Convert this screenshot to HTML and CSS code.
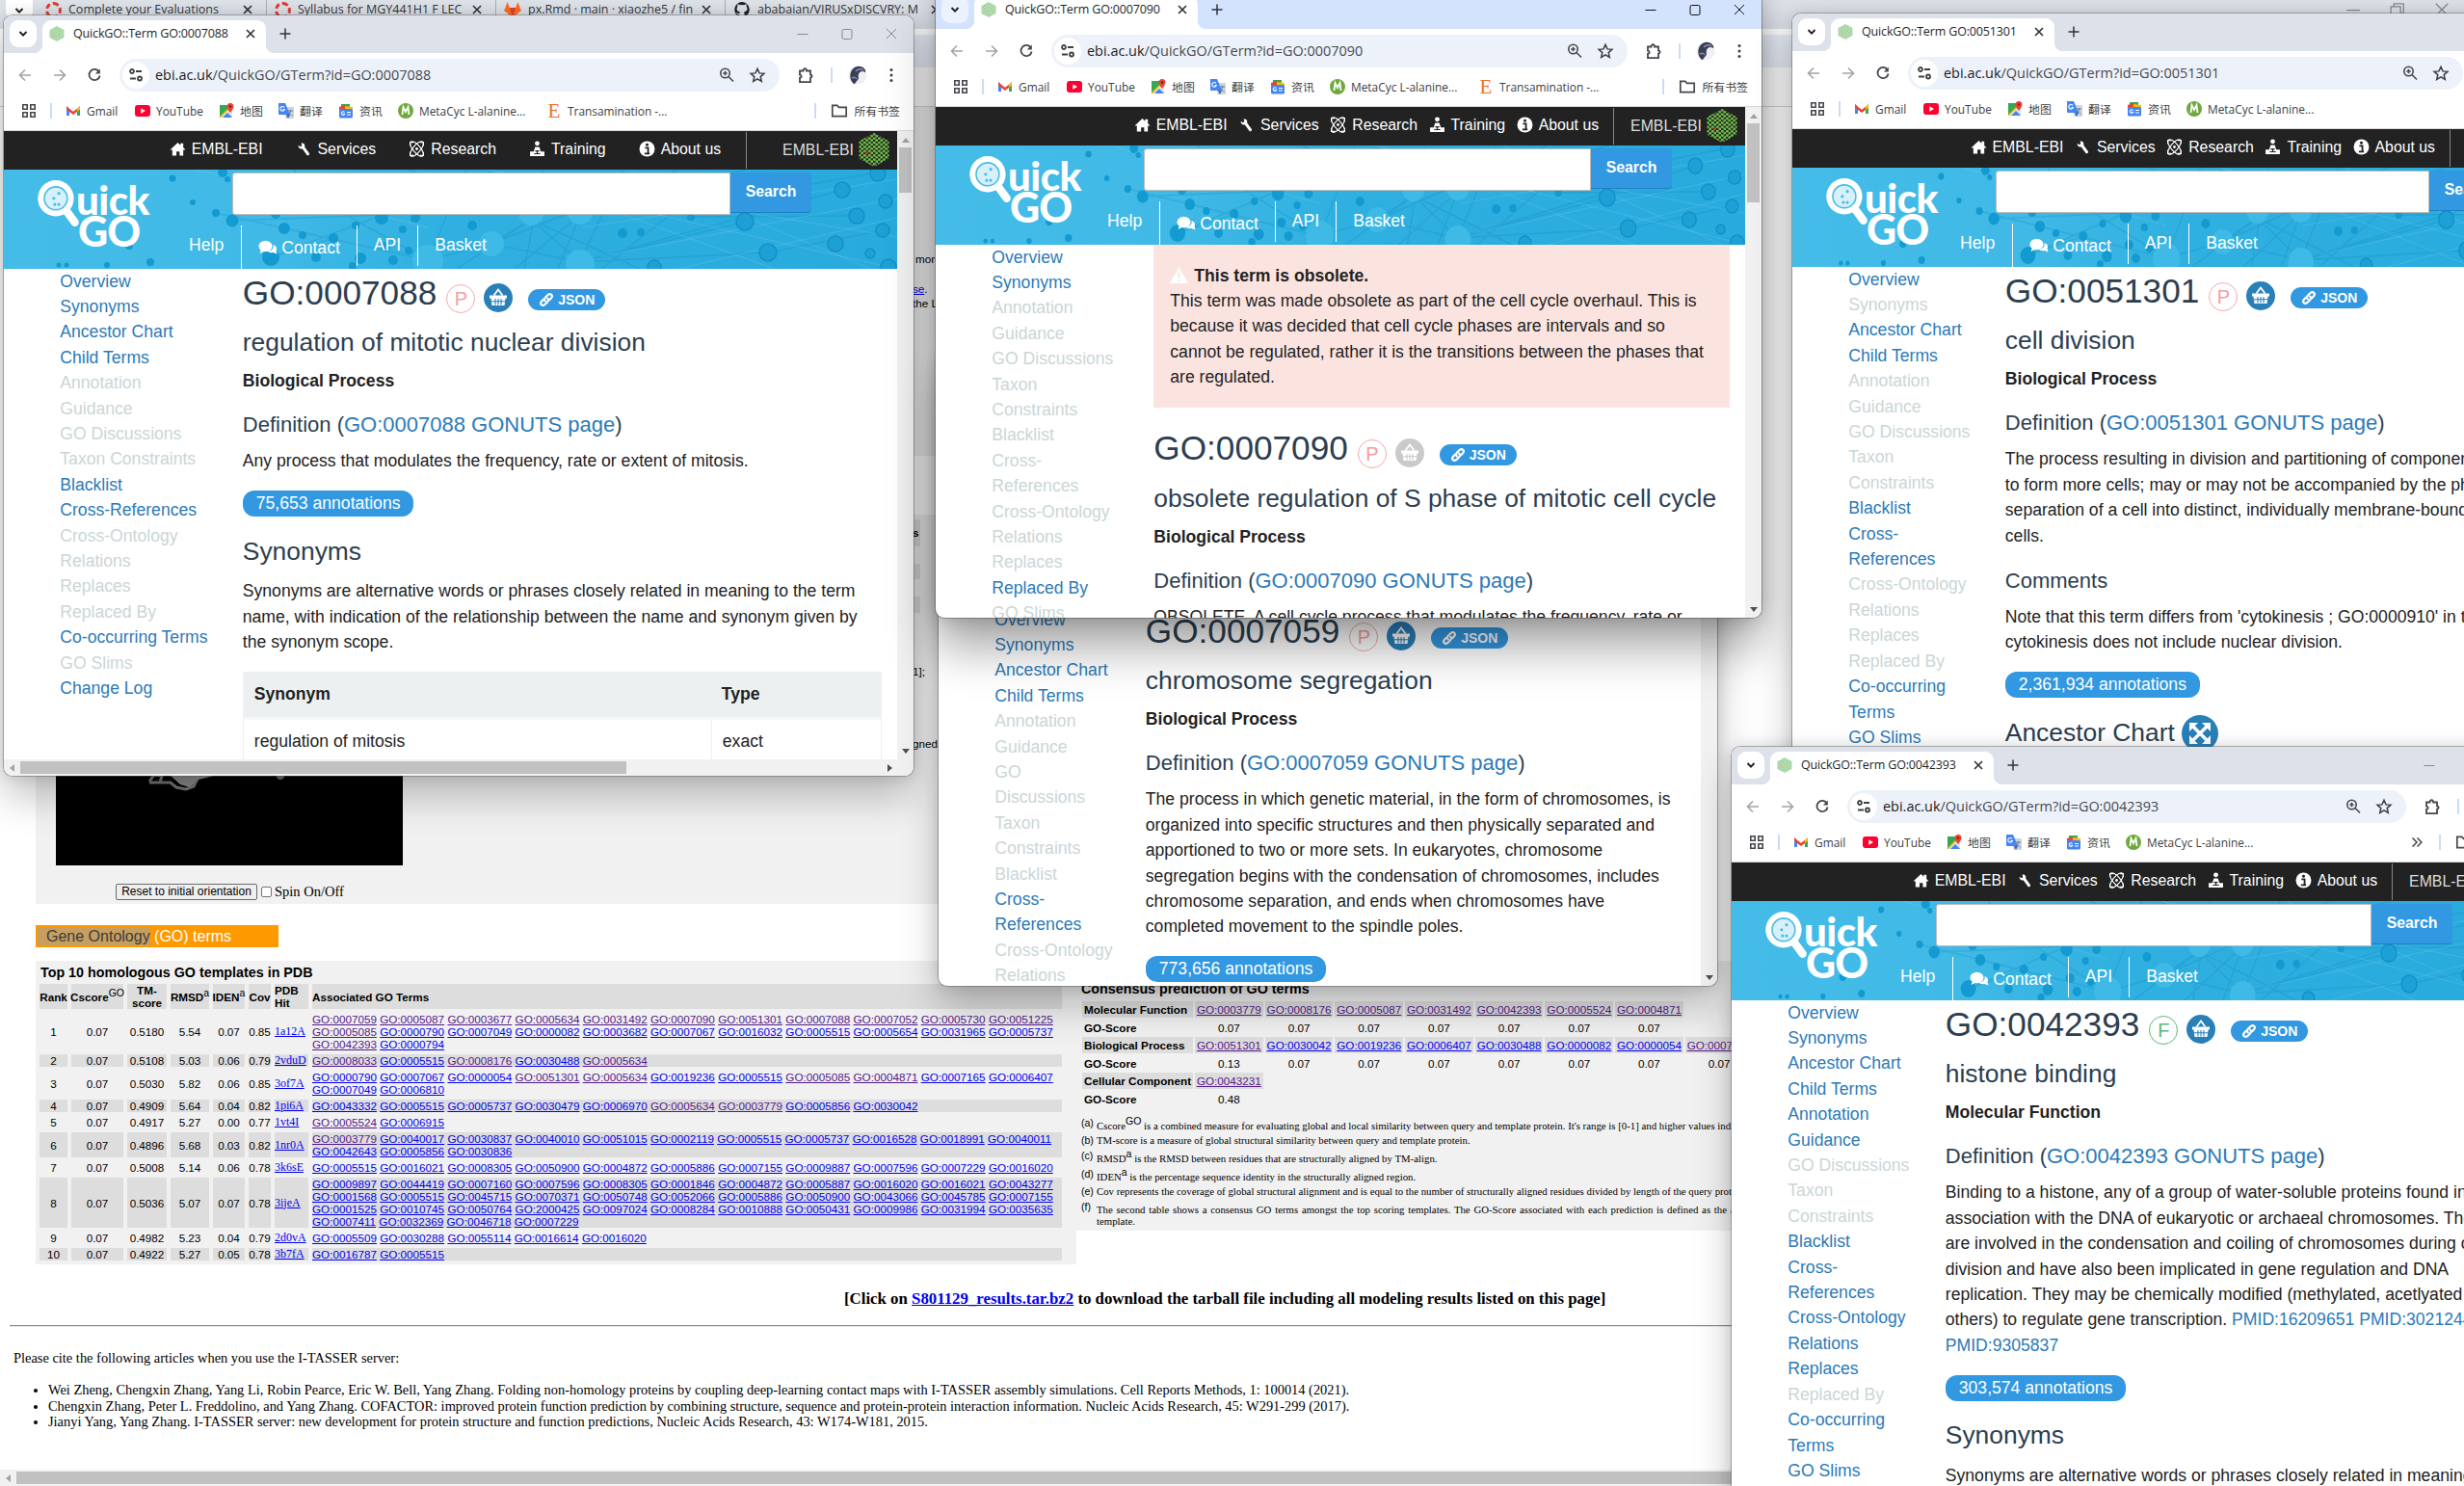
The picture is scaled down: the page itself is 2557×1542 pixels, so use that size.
FILE: index.html
```html
<!DOCTYPE html>
<html lang="en">
<head>
<meta charset="utf-8">
<title>QuickGO terms</title>
<link rel="stylesheet" href="styles.css">
</head>
<body>
<svg class="defs" aria-hidden="true">
  <defs>
    <pattern id="cells" width="5" height="4.4" patternUnits="userSpaceOnUse"><circle cx="1.25" cy="1.1" r="1.45" fill="#72c14a"/><circle cx="3.75" cy="3.3" r="1.45" fill="#72c14a"/></pattern>
    <pattern id="cellsPale" width="3.2" height="3.2" patternUnits="userSpaceOnUse"><rect width="3.2" height="3.2" fill="#cbe8c6"/><circle cx=".8" cy=".8" r=".9" fill="#8cc98a"/><circle cx="2.4" cy="2.4" r=".9" fill="#8cc98a"/></pattern>
    <linearGradient id="sea"><stop offset="0" stop-color="#45bce8"/><stop offset=".3" stop-color="#40b9e6"/><stop offset=".5" stop-color="#2fb0e0"/><stop offset="1" stop-color="#28aadd"/></linearGradient>
  </defs>
  <symbol id="i-chev" viewBox="0 0 16 16"><path d="M4.5 6l3.5 3.6L11.500 6" fill="none" stroke="#1f1f1f" stroke-width="1.9"/></symbol>
  <symbol id="i-fav" viewBox="0 0 16 16"><path d="M8 0l7.500 4v8L8 16 .5 12V4z" fill="url(#cellsPale)"/><circle cx="5" cy="9.500" r="1" fill="#f0a59a"/></symbol>
  <symbol id="i-x" viewBox="0 0 16 16"><path d="M4 4l8 8M12 4l-8 8" stroke="#303338" stroke-width="1.700"/></symbol>
  <symbol id="i-plus" viewBox="0 0 16 16"><path d="M8 2.500v11M2.500 8h11" stroke="#303338" stroke-width="1.500"/></symbol>
  <symbol id="i-min" viewBox="0 0 16 16"><path d="M2.500 8.500h11" stroke="currentColor"/></symbol>
  <symbol id="i-max" viewBox="0 0 16 16"><rect x="3" y="3.500" width="10" height="10" rx="1.500" fill="none" stroke="currentColor"/></symbol>
  <symbol id="i-rest" viewBox="0 0 16 16"><path d="M2.500 5.500h8v8h-8zM5 5V3h8v8h-2" fill="none" stroke="currentColor"/></symbol>
  <symbol id="i-close" viewBox="0 0 16 16"><path d="M3 3l10 10M13 3L3 13" stroke="currentColor"/></symbol>
  <symbol id="i-back" viewBox="0 0 18 18"><path d="M15 9H4M9 3.500L3.500 9 9 14.500" fill="none" stroke="#a0a3a8" stroke-width="1.600"/></symbol>
  <symbol id="i-fwd" viewBox="0 0 18 18"><path d="M3 9h11M9 3.500L14.500 9 9 14.500" fill="none" stroke="#a0a3a8" stroke-width="1.600"/></symbol>
  <symbol id="i-reload" viewBox="0 0 18 18"><path d="M13.800 5.500A5.600 5.600 0 1 0 14.600 9.500" fill="none" stroke="#44474c" stroke-width="1.800"/><path d="M14.800 2.500v5h-5z" fill="#44474c"/></symbol>
  <symbol id="i-tune" viewBox="0 0 18 18"><g fill="none" stroke="#3c4043" stroke-width="1.800"><circle cx="5" cy="5" r="2"/><path d="M9 5h6M3 12.500h6"/><circle cx="13" cy="12.500" r="2"/></g></symbol>
  <symbol id="i-zoom" viewBox="0 0 18 18"><g fill="none" stroke="#44474c" stroke-width="1.600"><circle cx="7.500" cy="7" r="4.700"/><path d="M11 10.500l5 5M7.500 4.800v4.400M5.300 7h4.400"/></g></symbol>
  <symbol id="i-star" viewBox="0 0 18 18"><path d="M9 2.300l2 4.600 4.900.4-3.700 3.300 1.100 4.900L9 12.900l-4.300 2.600 1.100-4.900-3.700-3.300 4.900-.4z" fill="none" stroke="#3c4043" stroke-width="1.500"/></symbol>
  <symbol id="i-ext" viewBox="0 0 18 18"><path d="M3 4.500h3.600c-.3-3 3.800-3 3.500 0H14v4c2.200.2 2.200 3 0 3.200v4.500H3v-4.300c2.300-.2 2.300-3 0-3.200z" fill="none" stroke="#44474c" stroke-width="1.800"/></symbol>
  <symbol id="i-face" viewBox="0 0 20 20"><circle cx="10" cy="10" r="9.500" fill="#eef0f4"/><path d="M3 15C0 6 7-1 13 1c4 1 6 4 5 6-3-2-6-1-7 2s1 4-1 6-3 5-4 4-2-2-3-4z" fill="#3b3f55"/><path d="M8 6c2-2 5-3 8-1M4 13c2-1 4-1 5 1" stroke="#8a90b8" stroke-width="1.500" fill="none"/></symbol>
  <symbol id="i-menu" viewBox="0 0 18 18"><g fill="#3c4043"><circle cx="9" cy="3.500" r="1.500"/><circle cx="9" cy="9" r="1.500"/><circle cx="9" cy="14.500" r="1.500"/></g></symbol>
  <symbol id="i-apps" viewBox="0 0 16 16"><path d="M1.800 1.800h4.400v4.400H1.800zM9.800 1.800h4.400v4.400H9.800zM1.800 9.800h4.400v4.400H1.800zM9.800 9.800h4.400v4.400H9.800z" fill="none" stroke="#44474c" stroke-width="1.600"/></symbol>
  <symbol id="i-gmail" viewBox="0 0 16 16"><path d="M1 3v10h3V6z" fill="#4285f4"/><path d="M15 3v10h-3V6z" fill="#34a853"/><path d="M1 3.200l3 2.500 4 3 4-3V9l-4 3-4-3-3-2.500z" fill="#ea4335"/><path d="M12 5.500l3-2.500v3.500L12 9z" fill="#fbbc04"/></symbol>
  <symbol id="i-yt" viewBox="0 0 16 16"><rect y="2" width="16" height="12" rx="3" fill="#f03"/><path d="M6.300 5.200v5.600L11 8z" fill="#fff"/></symbol>
  <symbol id="i-map" viewBox="0 0 16 16"><path d="M1 2h9v13H1z" fill="#34a853"/><path d="M1 15L12 4l2 4v7z" fill="#dfe3e6"/><path d="M4 15l5-5 5 5z" fill="#4285f4"/><path d="M1 15L11 5" stroke="#fbbc04" stroke-width="1.500"/><path d="M12 0a3.500 3.500 0 0 1 3.500 3.500C15.500 6 12 10 12 10S8.500 6 8.500 3.500A3.500 3.500 0 0 1 12 0z" fill="#ea4335"/><circle cx="12" cy="3.500" r="1.200" fill="#7a1f18"/></symbol>
  <symbol id="i-trans" viewBox="0 0 16 16"><rect x="7" y="4" width="9" height="12" rx="1" fill="#cfd4d9"/><path d="M0 0h7l5 12H1a1 1 0 0 1-1-1z" fill="#4285f4"/><path d="M8 12h4l-2 4z" fill="#2b62c4"/><path d="M6 4.500a2.300 2.300 0 1 0 .3 2H4.500" fill="none" stroke="#fff" stroke-width="1.100"/><path d="M10 8h5M12.500 7v1c0 2-1.500 4-2.500 4.500M11 9.500c.5 1.500 2 3 3.500 3.500" stroke="#5f7d9c" fill="none"/></symbol>
  <symbol id="i-news" viewBox="0 0 16 16"><path d="M3 1h9v6H3z" fill="#34a853"/><path d="M1 4l6-2 1 5H1z" fill="#ea4335"/><path d="M7 3l8 1v4H7z" fill="#fbbc04"/><rect x="1" y="6" width="14" height="9.500" rx="1.500" fill="#4285f4"/><path d="M6.500 9.500a1.800 1.800 0 1 0 .2 1.700H5.200M9 9.500h4M9 12h4" fill="none" stroke="#fff" stroke-width="1.100"/></symbol>
  <symbol id="i-meta" viewBox="0 0 16 16"><circle cx="8" cy="8" r="8" fill="#6fa83c"/><path d="M4.500 12L5.500 4l2.500 5 2.500-5 1 8" fill="none" stroke="#fff" stroke-width="1.800"/></symbol>
  <symbol id="i-folder" viewBox="0 0 18 16"><path d="M1.800 13.700V2.300h5l1.700 2h7.700v9.400z" fill="none" stroke="#44474c" stroke-width="1.700"/></symbol>
  <symbol id="i-home" viewBox="0 0 18 16"><path d="M9 1l3 3V2h3v4.500L17.500 9H15v6.500h-4V11H7.500v4.500H3V9H.5z" fill="#fff"/></symbol>
  <symbol id="i-wrench" viewBox="0 0 16 16"><path d="M2.500 4.500l2 1.300L6 4.800 5.200 2.500C8 2 9.300 4 8.600 6l4.600 6.500c.3 1.500-1.500 2.500-2.500 1.300L6.500 8C4.200 8.500 2.200 7 2.500 4.500z" fill="#fff"/></symbol>
  <symbol id="i-atom" viewBox="0 0 16 16"><g fill="none" stroke="#fff" stroke-width="1.100"><ellipse cx="8" cy="8" rx="9" ry="3.600" transform="rotate(50 8 8)"/><ellipse cx="8" cy="8" rx="9" ry="3.600" transform="rotate(-50 8 8)"/><path d="M1.500 5v-3.500H5M11 1.500h3.500V5M1.500 11v3.500H5M11 14.500h3.500V11"/></g><circle cx="8" cy="8" r="1.300" fill="#fff"/></symbol>
  <symbol id="i-train" viewBox="0 0 16 16"><circle cx="8" cy="2.700" r="2.300" fill="#fff"/><path d="M6 6h4l1.500 4.500H15V15H1v-4.500h3.500z" fill="#fff"/><path d="M6 10h4M5 12.700h6M8 10.500v2" stroke="#222" stroke-width="1.100"/></symbol>
  <symbol id="i-info" viewBox="0 0 16 16"><circle cx="8" cy="8" r="7.500" fill="#fff"/><path d="M6 7h3v5M5.500 12.500h5" stroke="#222" stroke-width="1.700" fill="none"/><circle cx="8" cy="4" r="1.400" fill="#222"/></symbol>
  <symbol id="i-hex" viewBox="0 0 32 35"><path d="M16 0l15.500 8.500v18L16 35 .5 26.500v-18z" fill="url(#cells)"/><circle cx="8.750" cy="21" r="1.500" fill="#e2231a"/></symbol>
  <symbol id="i-talk" viewBox="0 0 20 16"><ellipse cx="7.500" cy="6.500" rx="7" ry="5.700" fill="#fff"/><path d="M3 10l-1.500 4 5-2.500zM15.500 5c3 1 4.500 3.500 3 6l1 3.500-4-1.500c-3 .5-5-.3-6-1.500 4 0 7-2.500 6-6.500z" fill="#fff"/></symbol>
  <symbol id="i-basket" viewBox="0 0 30 30"><path d="M6 12.500h18v3H6zM7.500 15.500h15L21.500 23h-13z" fill="#fff"/><path d="M10.500 12.500L15 6.500l4.500 6" fill="none" stroke="#fff" stroke-width="1.800"/><path d="M8 18.800h14M12 16v6.500M15 16v6.500M18 16v6.500" stroke="var(--disc)" stroke-width="1.100"/></symbol>
  <symbol id="i-link" viewBox="0 0 16 16"><g fill="none" stroke="#fff" stroke-width="2.200" stroke-linecap="round"><path d="M6.800 9.300c-1.200-1-1-2.500 0-3.500l3-3c2.600-2 5.200.8 3.400 3.200l-2 2.200"/><path d="M9.200 6.700c1.200 1 1 2.500 0 3.500l-3 3c-2.600 2-5.200-.8-3.400-3.200l2-2.200"/></g></symbol>
  <symbol id="i-warn" viewBox="0 0 20 18"><path d="M10 0l10 18H0z" fill="#fff"/><path d="M10 6v6M10 14v2" stroke="#fbe4df" stroke-width="2"/></symbol>
  <symbol id="i-expand" viewBox="0 0 38 38"><circle cx="19" cy="19" r="19" fill="#2980b9"/><path d="M11 11l16 16M27 11L11 27" stroke="#fff" stroke-width="3.500"/><path d="M8 8h9l-9 9zM30 8h-9l9 9zM8 30h9l-9-9zM30 30h-9l9-9z" fill="#fff"/></symbol>
  <symbol id="net" viewBox="0 0 927 103" preserveAspectRatio="none">
    <rect width="927" height="103" fill="url(#sea)"/>
    <g stroke="#1186b8" stroke-opacity=".26" stroke-width="1.500" fill="none">
      <path d="M440 94L220 45M440 94L291 61M440 94L342 40 300 0M440 94L506 77 598 96M506 77L547 52 420 0M598 47L500 0M598 96L547 52M598 96L642 0M598 96L769 54M598 96L870 21M598 47L770 0M547 52L660 103M506 77L700 0M440 94L480 0M540 103L560 0M575 103L598 47L530 103M598 96L793 86M793 86L913 63M713 49L885 48M620 103L700 40 900 4M470 103L547 52M237 53L392 47M277 91L392 47M277 91L342 71"/>
    </g>
    <g stroke="#9fdcf5" stroke-opacity=".22" fill="none"><path d="M500 0L927 70M560 20L927 103M600 60L927 10M620 90L927 30M650 0L900 103M200 0L440 60M540 10L800 103M700 103L927 50"/></g>
    <g fill="#139ad0">
      <circle cx="175" cy="9" r="3.500"/><circle cx="196" cy="34" r="3"/><circle cx="220" cy="45" r="4"/><circle cx="237" cy="53" r="6.500"/><circle cx="227" cy="3" r="5"/><circle cx="232" cy="10" r="3"/><circle cx="291" cy="61" r="6"/><circle cx="282" cy="46" r="5"/><circle cx="152" cy="96" r="4"/><circle cx="107" cy="99" r="3"/><circle cx="57" cy="99" r="2.500"/><circle cx="65" cy="99" r="2.500"/><circle cx="130" cy="79" r="4"/><circle cx="277" cy="91" r="9"/><circle cx="324" cy="91" r="5"/><circle cx="342" cy="71" r="5"/><circle cx="310" cy="68" r="4"/><circle cx="365" cy="58" r="4"/><circle cx="370" cy="92" r="6"/><circle cx="362" cy="100" r="4"/><circle cx="392" cy="50" r="7"/><circle cx="396" cy="80" r="5"/><circle cx="404" cy="94" r="5"/><circle cx="414" cy="62" r="4"/><circle cx="420" cy="84" r="4"/><circle cx="427" cy="50" r="5"/><circle cx="486" cy="58" r="5"/><circle cx="642" cy="66" r="5"/><circle cx="661" cy="65" r="4"/><circle cx="713" cy="49" r="4"/>
    </g>
    <g fill="#1ca0d5" stroke="#1490c4" stroke-width="1.500"><circle cx="769" cy="54" r="9"/><circle cx="793" cy="86" r="9"/><circle cx="870" cy="21" r="8"/><circle cx="885" cy="48" r="8"/><circle cx="915" cy="33" r="7"/><circle cx="912" cy="63" r="7"/><circle cx="863" cy="77" r="8"/><circle cx="899" cy="87" r="5"/><circle cx="907" cy="4" r="8"/><circle cx="918" cy="101" r="8"/><circle cx="675" cy="101" r="7"/></g>
    <g fill="#3fbae7"><circle cx="440" cy="94" r="16"/><circle cx="506" cy="77" r="13"/><circle cx="547" cy="45" r="13"/><circle cx="598" cy="44" r="13"/><circle cx="598" cy="98" r="15"/></g>
  </symbol>
  <symbol id="q" viewBox="0 0 50 76"><circle cx="23" cy="21" r="18" fill="#fff"/><circle cx="23" cy="21" r="11.500" fill="#d7f0fb" stroke="#45bce8" stroke-width="1.500"/><path d="M34 34l8 11" stroke="#fff" stroke-width="8" stroke-linecap="round"/><g fill="#45bce8"><circle cx="26" cy="16" r="1.500"/><circle cx="21" cy="21" r="1.500"/><circle cx="22" cy="27" r="1.500"/><circle cx="26" cy="27" r="1.500"/></g></symbol>
</svg>

<div class="desk">

<!-- Maximised browser window: I-TASSER results -->
<div class="back">
  <div class="back-tabs">
    <span class="back-chev"><svg class="s16"><use href="#i-chev"/></svg></span>
    <span class="btab"><i class="canvas-ico"></i><b>Complete your Evaluations</b><svg class="s16"><use href="#i-x"/></svg></span>
    <span class="btab"><i class="canvas-ico"></i><b>Syllabus for MGY441H1 F LEC</b><svg class="s16"><use href="#i-x"/></svg></span>
    <span class="btab"><svg class="s18" viewBox="0 0 18 18"><path d="M1 8L3.500 1l2.500 6h6L14.500 1 17 8l1 2-9 7L0 10z" fill="#fc6d26"/><path d="M6 7h6l-3 10z" fill="#e24329"/></svg><b>px.Rmd · main · xiaozhe5 / fin</b><svg class="s16"><use href="#i-x"/></svg></span>
    <span class="btab"><svg class="s18" viewBox="0 0 18 18"><path d="M9 1a8 8 0 0 0-2.500 15.500V14c-2 .5-2.700-1-3.500-2 1.500 0 1.800 1.500 3.500 1 0-.7.300-1.200.6-1.500C3 11 3 7 4.500 5.800 4 4.500 4.600 3.300 4.600 3.300c1 0 2 .8 2.300 1a8 8 0 0 1 4.200 0c.3-.2 1.300-1 2.300-1 0 0 .6 1.200.1 2.500C15 7 15 11 10.900 11.500c.4.400.6 1 .6 2v3A8 8 0 0 0 9 1z" fill="#1f2328"/></svg><b>ababaian/VIRUSxDISCVRY: M</b><svg class="s16"><use href="#i-x"/></svg></span>
    <span class="ctl back-ctl"><svg class="s20"><use href="#i-min"/></svg><svg class="s20"><use href="#i-rest"/></svg><svg class="s20"><use href="#i-close"/></svg></span>
  </div>
  <div class="back-bar"><div class="back-omni"></div></div>
  <div class="res">
    <div class="box box-a"><div class="frag"><p class="f1">more</p><p class="f2"><a>se</a>.</p><p>the L</p></div></div>
    <div class="box box-b">
      <div class="viewer">
        <div class="jmol"><svg viewBox="0 0 360 60" width="360" height="60"><path d="M97 9l5-7 8 1-2 7M97 10h22l6 5 10 2 8-3 4-8" fill="none" stroke="#777" stroke-width="3"/><path d="M118 2h50l-20 5-9 8-10-3z" fill="#8d8d8d"/><circle cx="233" cy="3" r="4" fill="#6d6d6d"/></svg></div>
        <div class="spin"><span class="btn">Reset to initial orientation</span><span class="chk"></span><span>Spin On/Off</span></div>
      </div>
      <div class="frag frag-b"><p class="cell">s</p><p class="cell c2"></p><p class="cell c3"></p><p class="f3">1];</p><p class="f4">gned</p></div>
    </div>
    <div class="banner"><mark>Gene Ontology</mark> (GO) terms</div>
    <div class="go">
      <div class="go-l">
        <h2>Top 10 homologous GO templates in PDB</h2>
        <div class="t hd"><b>Rank</b><b>Cscore<sup>GO</sup></b><b>TM-<br>score</b><b>RMSD<sup>a</sup></b><b>IDEN<sup>a</sup></b><b>Cov</b><b class="l">PDB<br>Hit</b><b class="l">Associated GO Terms</b></div>
        <div class="t"><i>1</i><i>0.07</i><i>0.5180</i><i>5.54</i><i>0.07</i><i>0.85</i><i class="p"><a>1a12A</a></i><i class="g"><a class="v">GO:0007059</a> <a class="v">GO:0005087</a> <a class="v">GO:0003677</a> <a class="v">GO:0005634</a> <a class="v">GO:0031492</a> <a class="v">GO:0007090</a> <a class="v">GO:0051301</a> <a class="v">GO:0007088</a> <a class="v">GO:0007052</a> <a class="v">GO:0005730</a> <a class="v">GO:0051225</a> <a class="v">GO:0005085</a> <a>GO:0000790</a> <a>GO:0007049</a> <a>GO:0000082</a> <a>GO:0003682</a> <a>GO:0007067</a> <a>GO:0016032</a> <a>GO:0005515</a> <a>GO:0005654</a> <a>GO:0031965</a> <a>GO:0005737</a> <a class="v">GO:0042393</a> <a>GO:0000794</a></i></div>
        <div class="t dk"><i>2</i><i>0.07</i><i>0.5108</i><i>5.03</i><i>0.06</i><i>0.79</i><i class="p"><a>2vduD</a></i><i class="g"><a class="v">GO:0008033</a> <a>GO:0005515</a> <a class="v">GO:0008176</a> <a>GO:0030488</a> <a class="v">GO:0005634</a></i></div>
        <div class="t"><i>3</i><i>0.07</i><i>0.5030</i><i>5.82</i><i>0.06</i><i>0.85</i><i class="p"><a>3of7A</a></i><i class="g"><a>GO:0000790</a> <a>GO:0007067</a> <a>GO:0000054</a> <a class="v">GO:0051301</a> <a class="v">GO:0005634</a> <a>GO:0019236</a> <a>GO:0005515</a> <a class="v">GO:0005085</a> <a class="v">GO:0004871</a> <a>GO:0007165</a> <a>GO:0006407</a> <a>GO:0007049</a> <a>GO:0006810</a></i></div>
        <div class="t dk"><i>4</i><i>0.07</i><i>0.4909</i><i>5.64</i><i>0.04</i><i>0.82</i><i class="p"><a>1pi6A</a></i><i class="g"><a>GO:0043332</a> <a>GO:0005515</a> <a>GO:0005737</a> <a>GO:0030479</a> <a>GO:0006970</a> <a class="v">GO:0005634</a> <a class="v">GO:0003779</a> <a>GO:0005856</a> <a>GO:0030042</a></i></div>
        <div class="t"><i>5</i><i>0.07</i><i>0.4917</i><i>5.27</i><i>0.00</i><i>0.77</i><i class="p"><a>1vt4I</a></i><i class="g"><a class="v">GO:0005524</a> <a>GO:0006915</a></i></div>
        <div class="t dk"><i>6</i><i>0.07</i><i>0.4896</i><i>5.68</i><i>0.03</i><i>0.82</i><i class="p"><a>1nr0A</a></i><i class="g"><a class="v">GO:0003779</a> <a>GO:0040017</a> <a>GO:0030837</a> <a>GO:0040010</a> <a>GO:0051015</a> <a>GO:0002119</a> <a>GO:0005515</a> <a>GO:0005737</a> <a>GO:0016528</a> <a>GO:0018991</a> <a>GO:0040011</a> <a>GO:0042643</a> <a>GO:0005856</a> <a>GO:0030836</a></i></div>
        <div class="t"><i>7</i><i>0.07</i><i>0.5008</i><i>5.14</i><i>0.06</i><i>0.78</i><i class="p"><a>3k6sE</a></i><i class="g"><a>GO:0005515</a> <a>GO:0016021</a> <a>GO:0008305</a> <a>GO:0050900</a> <a>GO:0004872</a> <a>GO:0005886</a> <a>GO:0007155</a> <a>GO:0009887</a> <a>GO:0007596</a> <a>GO:0007229</a> <a>GO:0016020</a></i></div>
        <div class="t dk"><i>8</i><i>0.07</i><i>0.5036</i><i>5.07</i><i>0.07</i><i>0.78</i><i class="p"><a>3ijeA</a></i><i class="g"><a>GO:0009897</a> <a>GO:0044419</a> <a>GO:0007160</a> <a>GO:0007596</a> <a>GO:0008305</a> <a>GO:0001846</a> <a>GO:0004872</a> <a>GO:0005887</a> <a>GO:0016020</a> <a>GO:0016021</a> <a>GO:0043277</a> <a>GO:0001568</a> <a>GO:0005515</a> <a>GO:0045715</a> <a>GO:0070371</a> <a>GO:0050748</a> <a>GO:0052066</a> <a>GO:0005886</a> <a>GO:0050900</a> <a>GO:0043066</a> <a>GO:0045785</a> <a>GO:0007155</a> <a>GO:0001525</a> <a>GO:0010745</a> <a>GO:0050764</a> <a>GO:2000425</a> <a>GO:0097024</a> <a>GO:0008284</a> <a>GO:0010888</a> <a>GO:0050431</a> <a>GO:0009986</a> <a>GO:0031994</a> <a>GO:0035635</a> <a>GO:0007411</a> <a>GO:0032369</a> <a>GO:0046718</a> <a>GO:0007229</a></i></div>
        <div class="t"><i>9</i><i>0.07</i><i>0.4982</i><i>5.23</i><i>0.04</i><i>0.79</i><i class="p"><a>2d0vA</a></i><i class="g"><a>GO:0005509</a> <a>GO:0030288</a> <a>GO:0055114</a> <a>GO:0016614</a> <a>GO:0016020</a></i></div>
        <div class="t dk"><i>10</i><i>0.07</i><i>0.4922</i><i>5.27</i><i>0.05</i><i>0.78</i><i class="p"><a>3b7fA</a></i><i class="g"><a>GO:0016787</a> <a>GO:0005515</a></i></div>
      </div>
      <div class="go-r">
        <h2>Consensus prediction of GO terms</h2>
        <div class="c dk"><b>Molecular Function</b><a class="v">GO:0003779</a><a class="v">GO:0008176</a><a class="v">GO:0005087</a><a class="v">GO:0031492</a><a class="v">GO:0042393</a><a class="v">GO:0005524</a><a class="v">GO:0004871</a></div>
        <div class="c"><b>GO-Score</b><i>0.07</i><i>0.07</i><i>0.07</i><i>0.07</i><i>0.07</i><i>0.07</i><i>0.07</i></div>
        <div class="c dk"><b>Biological Process</b><a class="v">GO:0051301</a><a>GO:0030042</a><a>GO:0019236</a><a>GO:0006407</a><a>GO:0030488</a><a>GO:0000082</a><a>GO:0000054</a><a class="v">GO:0007059</a></div>
        <div class="c"><b>GO-Score</b><i>0.13</i><i>0.07</i><i>0.07</i><i>0.07</i><i>0.07</i><i>0.07</i><i>0.07</i><i>0.07</i></div>
        <div class="c dk"><b>Cellular Component</b><a class="v">GO:0043231</a></div>
        <div class="c"><b>GO-Score</b><i>0.48</i></div>
        <div class="notes">
          <p class="n1"><span>(a)</span>Cscore<sup>GO</sup> is a combined measure for evaluating global and local similarity between query and template protein. It's range is [0-1] and higher values indicate</p>
          <p class="n2"><span>(b)</span>TM-score is a measure of global structural similarity between query and template protein.</p>
          <p class="n1"><span>(c)</span>RMSD<sup>a</sup> is the RMSD between residues that are structurally aligned by TM-align.</p>
          <p class="n1"><span>(d)</span>IDEN<sup>a</sup> is the percentage sequence identity in the structurally aligned region.</p>
          <p class="n2"><span>(e)</span>Cov represents the coverage of global structural alignment and is equal to the number of structurally aligned residues divided by length of the query protein.</p>
          <p class="n1 wide"><span>(f)</span>The second table shows a consensus GO terms amongst the top scoring templates. The GO-Score associated with each prediction is defined as the average</p>
          <p class="n3"><span></span>template.</p>
        </div>
      </div>
    </div>
    <p class="dl">[Click on <a>S801129_results.tar.bz2</a> to download the tarball file including all modeling results listed on this page]</p>
    <div class="hr"></div>
    <p class="cite">Please cite the following articles when you use the I-TASSER server:</p>
    <ul class="refs">
      <li>Wei Zheng, Chengxin Zhang, Yang Li, Robin Pearce, Eric W. Bell, Yang Zhang. Folding non-homology proteins by coupling deep-learning contact maps with I-TASSER assembly simulations. Cell Reports Methods, 1: 100014 (2021).</li>
      <li>Chengxin Zhang, Peter L. Freddolino, and Yang Zhang. COFACTOR: improved protein function prediction by combining structure, sequence and protein-protein interaction information. Nucleic Acids Research, 45: W291-299 (2017).</li>
      <li>Jianyi Yang, Yang Zhang. I-TASSER server: new development for protein structure and function predictions, Nucleic Acids Research, 43: W174-W181, 2015.</li>
    </ul>
    <div class="hscroll back-scroll"><i class="al"></i><span class="hthumb"></span></div>
  </div>
</div>

<!-- GO:0007088 -->
<div class="win w1">
  <div class="tabs"><span class="chev"><svg class="s16"><use href="#i-chev"/></svg></span><span class="tab"><svg class="s16"><use href="#i-fav"/></svg><span class="ttl">QuickGO::Term GO:0007088</span><svg class="s16"><use href="#i-x"/></svg></span><svg class="s16 plus"><use href="#i-plus"/></svg><span class="ctl"><svg class="s16"><use href="#i-min"/></svg><svg class="s16"><use href="#i-max"/></svg><svg class="s16"><use href="#i-close"/></svg></span></div>
  <div class="bar"><svg class="s18"><use href="#i-back"/></svg><svg class="s18"><use href="#i-fwd"/></svg><svg class="s18"><use href="#i-reload"/></svg><div class="omni"><span class="tune"><svg class="s18"><use href="#i-tune"/></svg></span><span class="url"><b>ebi.ac.uk</b>/QuickGO/GTerm?id=GO:0007088</span><svg class="s18"><use href="#i-zoom"/></svg><svg class="s18"><use href="#i-star"/></svg></div><svg class="s18"><use href="#i-ext"/></svg><i class="sep"></i><svg class="s20"><use href="#i-face"/></svg><svg class="s18"><use href="#i-menu"/></svg></div>
  <div class="marks"><svg class="s16"><use href="#i-apps"/></svg><i class="sep"></i><span class="m m1"><svg class="s16"><use href="#i-gmail"/></svg>Gmail</span><span class="m m2"><svg class="s16"><use href="#i-yt"/></svg>YouTube</span><span class="m m3"><svg class="s16"><use href="#i-map"/></svg>地图</span><span class="m m3"><svg class="s16"><use href="#i-trans"/></svg>翻译</span><span class="m m3"><svg class="s16"><use href="#i-news"/></svg>资讯</span><span class="m m4"><svg class="s16"><use href="#i-meta"/></svg>MetaCyc L-alanine...</span><span class="m m5"><i class="els">E</i>Transamination -...</span><span class="allm"><i class="sep"></i><svg class="s18"><use href="#i-folder"/></svg>所有书签</span></div>
  <div class="view"><div class="page">
    <div class="ebi"><span><svg class="s18"><use href="#i-home"/></svg>EMBL-EBI</span><span><svg class="s18"><use href="#i-wrench"/></svg>Services</span><span><svg class="s18"><use href="#i-atom"/></svg>Research</span><span><svg class="s18"><use href="#i-train"/></svg>Training</span><span><svg class="s18"><use href="#i-info"/></svg>About us</span><span class="brand">EMBL-EBI<svg class="hex"><use href="#i-hex"/></svg></span></div>
    <div class="hero"><svg class="net"><use href="#net"/></svg><div class="logo"><svg class="q"><use href="#q"/></svg><span class="l1">uick</span><span class="l2">GO</span></div><div class="hmain"><div class="srch"><span class="inp"></span><span class="go-btn">Search</span></div><div class="nav"><span>Help</span><span class="tall"><svg class="talk"><use href="#i-talk"/></svg>Contact</span><span>API</span><span>Basket</span></div></div></div>
    <div class="cols">
      <div class="side"><a>Overview</a><a>Synonyms</a><a>Ancestor Chart</a><a>Child Terms</a><i>Annotation</i><i>Guidance</i><i>GO Discussions</i><i>Taxon Constraints</i><a>Blacklist</a><a>Cross-References</a><i>Cross-Ontology</i><i>Relations</i><i>Replaces</i><i>Replaced By</i><a>Co-occurring Terms</a><i>GO Slims</i><a>Change Log</a></div>
      <div class="main">
        <div class="h1"><h1>GO:0007088</h1><span class="asp">P</span><span class="bsk"><svg><use href="#i-basket"/></svg></span><span class="json"><svg class="s16"><use href="#i-link"/></svg>JSON</span></div>
        <h3>regulation of mitotic nuclear division</h3>
        <p class="aspect">Biological Process</p>
        <h4>Definition (<a>GO:0007088 GONUTS page</a>)</h4>
        <p>Any process that modulates the frequency, rate or extent of mitosis.</p>
        <span class="pill">75,653 annotations</span>
        <h3 class="sec">Synonyms</h3>
        <p>Synonyms are alternative words or phrases closely related in meaning to the term<br>name, with indication of the relationship between the name and synonym given by<br>the synonym scope.</p>
        <div class="tbl"><div class="tr th"><b>Synonym</b><b>Type</b></div><div class="tr"><span>regulation of mitosis</span><span>exact</span></div></div>
      </div>
    </div>
  </div><div class="vscroll"><i class="au"></i><span class="vthumb"></span><i class="ad"></i></div></div>
  <div class="hscroll"><i class="al"></i><span class="hthumb"></span><i class="ar"></i></div>
</div>

<!-- GO:0007059, its own title bar lies behind the next window -->
<div class="win w3">
  <div class="view"><div class="page">
    <div class="cols">
      <div class="side"><a>Overview</a><a>Synonyms</a><a>Ancestor Chart</a><a>Child Terms</a><i>Annotation</i><i>Guidance</i><i>GO<br>Discussions</i><i>Taxon<br>Constraints</i><i>Blacklist</i><a>Cross-<br>References</a><i>Cross-Ontology</i><i>Relations</i></div>
      <div class="main">
        <div class="h1"><h1>GO:0007059</h1><span class="asp">P</span><span class="bsk"><svg><use href="#i-basket"/></svg></span><span class="json"><svg class="s16"><use href="#i-link"/></svg>JSON</span></div>
        <h3>chromosome segregation</h3>
        <p class="aspect">Biological Process</p>
        <h4>Definition (<a>GO:0007059 GONUTS page</a>)</h4>
        <p>The process in which genetic material, in the form of chromosomes, is<br>organized into specific structures and then physically separated and<br>apportioned to two or more sets. In eukaryotes, chromosome<br>segregation begins with the condensation of chromosomes, includes<br>chromosome separation, and ends when chromosomes have<br>completed movement to the spindle poles.</p>
        <span class="pill">773,656 annotations</span>
      </div>
    </div>
  </div><div class="vscroll"><i class="ad"></i></div></div>
</div>

<!-- GO:0007090 -->
<div class="win w2 active">
  <div class="tabs"><span class="chev"><svg class="s16"><use href="#i-chev"/></svg></span><span class="tab"><svg class="s16"><use href="#i-fav"/></svg><span class="ttl">QuickGO::Term GO:0007090</span><svg class="s16"><use href="#i-x"/></svg></span><svg class="s16 plus"><use href="#i-plus"/></svg><span class="ctl"><svg class="s16"><use href="#i-min"/></svg><svg class="s16"><use href="#i-max"/></svg><svg class="s16"><use href="#i-close"/></svg></span></div>
  <div class="bar"><svg class="s18"><use href="#i-back"/></svg><svg class="s18"><use href="#i-fwd"/></svg><svg class="s18"><use href="#i-reload"/></svg><div class="omni"><span class="tune"><svg class="s18"><use href="#i-tune"/></svg></span><span class="url"><b>ebi.ac.uk</b>/QuickGO/GTerm?id=GO:0007090</span><svg class="s18"><use href="#i-zoom"/></svg><svg class="s18"><use href="#i-star"/></svg></div><svg class="s18"><use href="#i-ext"/></svg><i class="sep"></i><svg class="s20"><use href="#i-face"/></svg><svg class="s18"><use href="#i-menu"/></svg></div>
  <div class="marks"><svg class="s16"><use href="#i-apps"/></svg><i class="sep"></i><span class="m m1"><svg class="s16"><use href="#i-gmail"/></svg>Gmail</span><span class="m m2"><svg class="s16"><use href="#i-yt"/></svg>YouTube</span><span class="m m3"><svg class="s16"><use href="#i-map"/></svg>地图</span><span class="m m3"><svg class="s16"><use href="#i-trans"/></svg>翻译</span><span class="m m3"><svg class="s16"><use href="#i-news"/></svg>资讯</span><span class="m m4"><svg class="s16"><use href="#i-meta"/></svg>MetaCyc L-alanine...</span><span class="m m5"><i class="els">E</i>Transamination -...</span><span class="allm"><i class="sep"></i><svg class="s18"><use href="#i-folder"/></svg>所有书签</span></div>
  <div class="view"><div class="page">
    <div class="ebi"><span><svg class="s18"><use href="#i-home"/></svg>EMBL-EBI</span><span><svg class="s18"><use href="#i-wrench"/></svg>Services</span><span><svg class="s18"><use href="#i-atom"/></svg>Research</span><span><svg class="s18"><use href="#i-train"/></svg>Training</span><span><svg class="s18"><use href="#i-info"/></svg>About us</span><span class="brand">EMBL-EBI<svg class="hex"><use href="#i-hex"/></svg></span></div>
    <div class="hero"><svg class="net"><use href="#net"/></svg><div class="logo"><svg class="q"><use href="#q"/></svg><span class="l1">uick</span><span class="l2">GO</span></div><div class="hmain"><div class="srch"><span class="inp"></span><span class="go-btn">Search</span></div><div class="nav"><span>Help</span><span class="tall"><svg class="talk"><use href="#i-talk"/></svg>Contact</span><span>API</span><span>Basket</span></div></div></div>
    <div class="cols">
      <div class="side"><a>Overview</a><a>Synonyms</a><i>Annotation</i><i>Guidance</i><i>GO Discussions</i><i>Taxon<br>Constraints</i><i>Blacklist</i><i>Cross-<br>References</i><i>Cross-Ontology</i><i>Relations</i><i>Replaces</i><a>Replaced By</a><i>GO Slims</i></div>
      <div class="main">
        <div class="alert"><b><svg class="warn"><use href="#i-warn"/></svg>This term is obsolete.</b><br>This term was made obsolete as part of the cell cycle overhaul. This is<br>because it was decided that cell cycle phases are intervals and so<br>cannot be regulated, rather it is the transitions between the phases that<br>are regulated.</div>
        <div class="h1"><h1>GO:0007090</h1><span class="asp">P</span><span class="bsk off"><svg><use href="#i-basket"/></svg></span><span class="json"><svg class="s16"><use href="#i-link"/></svg>JSON</span></div>
        <h3>obsolete regulation of S phase of mitotic cell cycle</h3>
        <p class="aspect">Biological Process</p>
        <h4>Definition (<a>GO:0007090 GONUTS page</a>)</h4>
        <p>OBSOLETE. A cell cycle process that modulates the frequency, rate or</p>
      </div>
    </div>
  </div><div class="vscroll"><i class="au"></i><span class="vthumb"></span><i class="ad"></i></div></div>
</div>

<!-- GO:0051301 -->
<div class="win w4">
  <div class="tabs"><span class="chev"><svg class="s16"><use href="#i-chev"/></svg></span><span class="tab"><svg class="s16"><use href="#i-fav"/></svg><span class="ttl">QuickGO::Term GO:0051301</span><svg class="s16"><use href="#i-x"/></svg></span><svg class="s16 plus"><use href="#i-plus"/></svg></div>
  <div class="bar"><svg class="s18"><use href="#i-back"/></svg><svg class="s18"><use href="#i-fwd"/></svg><svg class="s18"><use href="#i-reload"/></svg><div class="omni"><span class="tune"><svg class="s18"><use href="#i-tune"/></svg></span><span class="url"><b>ebi.ac.uk</b>/QuickGO/GTerm?id=GO:0051301</span><svg class="s18"><use href="#i-zoom"/></svg><svg class="s18"><use href="#i-star"/></svg></div></div>
  <div class="marks"><svg class="s16"><use href="#i-apps"/></svg><i class="sep"></i><span class="m m1"><svg class="s16"><use href="#i-gmail"/></svg>Gmail</span><span class="m m2"><svg class="s16"><use href="#i-yt"/></svg>YouTube</span><span class="m m3"><svg class="s16"><use href="#i-map"/></svg>地图</span><span class="m m3"><svg class="s16"><use href="#i-trans"/></svg>翻译</span><span class="m m3"><svg class="s16"><use href="#i-news"/></svg>资讯</span><span class="m m4"><svg class="s16"><use href="#i-meta"/></svg>MetaCyc L-alanine...</span></div>
  <div class="view"><div class="page">
    <div class="ebi"><span><svg class="s18"><use href="#i-home"/></svg>EMBL-EBI</span><span><svg class="s18"><use href="#i-wrench"/></svg>Services</span><span><svg class="s18"><use href="#i-atom"/></svg>Research</span><span><svg class="s18"><use href="#i-train"/></svg>Training</span><span><svg class="s18"><use href="#i-info"/></svg>About us</span><span class="brand"></span></div>
    <div class="hero"><svg class="net"><use href="#net"/></svg><div class="logo"><svg class="q"><use href="#q"/></svg><span class="l1">uick</span><span class="l2">GO</span></div><div class="hmain"><div class="srch"><span class="inp"></span><span class="go-btn">Search</span></div><div class="nav"><span>Help</span><span class="tall"><svg class="talk"><use href="#i-talk"/></svg>Contact</span><span>API</span><span>Basket</span></div></div></div>
    <div class="cols">
      <div class="side"><a>Overview</a><i>Synonyms</i><a>Ancestor Chart</a><a>Child Terms</a><i>Annotation</i><i>Guidance</i><i>GO Discussions</i><i>Taxon<br>Constraints</i><a>Blacklist</a><a>Cross-<br>References</a><i>Cross-Ontology</i><i>Relations</i><i>Replaces</i><i>Replaced By</i><a>Co-occurring<br>Terms</a><a>GO Slims</a></div>
      <div class="main">
        <div class="h1"><h1>GO:0051301</h1><span class="asp">P</span><span class="bsk"><svg><use href="#i-basket"/></svg></span><span class="json"><svg class="s16"><use href="#i-link"/></svg>JSON</span></div>
        <h3>cell division</h3>
        <p class="aspect">Biological Process</p>
        <h4>Definition (<a>GO:0051301 GONUTS page</a>)</h4>
        <p>The process resulting in division and partitioning of components of a cell<br>to form more cells; may or may not be accompanied by the physical<br>separation of a cell into distinct, individually membrane-bounded daughter<br>cells.</p>
        <h4>Comments</h4>
        <p>Note that this term differs from 'cytokinesis ; GO:0000910' in that<br>cytokinesis does not include nuclear division.</p>
        <span class="pill">2,361,934 annotations</span>
        <h3 class="sec chart">Ancestor Chart <svg class="exp"><use href="#i-expand"/></svg></h3>
      </div>
    </div>
  </div></div>
</div>

<!-- GO:0042393 -->
<div class="win w5">
  <div class="tabs"><span class="chev"><svg class="s16"><use href="#i-chev"/></svg></span><span class="tab"><svg class="s16"><use href="#i-fav"/></svg><span class="ttl">QuickGO::Term GO:0042393</span><svg class="s16"><use href="#i-x"/></svg></span><svg class="s16 plus"><use href="#i-plus"/></svg><span class="ctl"><svg class="s16"><use href="#i-min"/></svg><svg class="s16"><use href="#i-max"/></svg><svg class="s16"><use href="#i-close"/></svg></span></div>
  <div class="bar"><svg class="s18"><use href="#i-back"/></svg><svg class="s18"><use href="#i-fwd"/></svg><svg class="s18"><use href="#i-reload"/></svg><div class="omni"><span class="tune"><svg class="s18"><use href="#i-tune"/></svg></span><span class="url"><b>ebi.ac.uk</b>/QuickGO/GTerm?id=GO:0042393</span><svg class="s18"><use href="#i-zoom"/></svg><svg class="s18"><use href="#i-star"/></svg></div><svg class="s18"><use href="#i-ext"/></svg><i class="sep"></i><svg class="s20"><use href="#i-face"/></svg><svg class="s18"><use href="#i-menu"/></svg></div>
  <div class="marks"><svg class="s16"><use href="#i-apps"/></svg><i class="sep"></i><span class="m m1"><svg class="s16"><use href="#i-gmail"/></svg>Gmail</span><span class="m m2"><svg class="s16"><use href="#i-yt"/></svg>YouTube</span><span class="m m3"><svg class="s16"><use href="#i-map"/></svg>地图</span><span class="m m3"><svg class="s16"><use href="#i-trans"/></svg>翻译</span><span class="m m3"><svg class="s16"><use href="#i-news"/></svg>资讯</span><span class="m m4"><svg class="s16"><use href="#i-meta"/></svg>MetaCyc L-alanine...</span><span class="allm"><svg class="more" viewBox="0 0 12 12"><path d="M1.500 1.500L6 6l-4.500 4.500M6.500 1.500L11 6l-4.500 4.500" fill="none" stroke="#44474c" stroke-width="1.500"/></svg><i class="sep"></i><svg class="s18"><use href="#i-folder"/></svg><span class="allt"></span></span></div>
  <div class="view"><div class="page">
    <div class="ebi"><span><svg class="s18"><use href="#i-home"/></svg>EMBL-EBI</span><span><svg class="s18"><use href="#i-wrench"/></svg>Services</span><span><svg class="s18"><use href="#i-atom"/></svg>Research</span><span><svg class="s18"><use href="#i-train"/></svg>Training</span><span><svg class="s18"><use href="#i-info"/></svg>About us</span><span class="brand">EMBL-EBI<svg class="hex"><use href="#i-hex"/></svg></span></div>
    <div class="hero"><svg class="net"><use href="#net"/></svg><div class="logo"><svg class="q"><use href="#q"/></svg><span class="l1">uick</span><span class="l2">GO</span></div><div class="hmain"><div class="srch"><span class="inp"></span><span class="go-btn">Search</span></div><div class="nav"><span>Help</span><span class="tall"><svg class="talk"><use href="#i-talk"/></svg>Contact</span><span>API</span><span>Basket</span></div></div></div>
    <div class="cols">
      <div class="side"><a>Overview</a><a>Synonyms</a><a>Ancestor Chart</a><a>Child Terms</a><a>Annotation</a><a>Guidance</a><i>GO Discussions</i><i>Taxon<br>Constraints</i><a>Blacklist</a><a>Cross-<br>References</a><a>Cross-Ontology</a><a>Relations</a><a>Replaces</a><i>Replaced By</i><a>Co-occurring<br>Terms</a><a>GO Slims</a></div>
      <div class="main">
        <div class="h1"><h1>GO:0042393</h1><span class="asp fn">F</span><span class="bsk"><svg><use href="#i-basket"/></svg></span><span class="json"><svg class="s16"><use href="#i-link"/></svg>JSON</span></div>
        <h3>histone binding</h3>
        <p class="aspect">Molecular Function</p>
        <h4>Definition (<a>GO:0042393 GONUTS page</a>)</h4>
        <p>Binding to a histone, any of a group of water-soluble proteins found in<br>association with the DNA of eukaryotic or archaeal chromosomes. They<br>are involved in the condensation and coiling of chromosomes during cell<br>division and have also been implicated in gene regulation and DNA<br>replication. They may be chemically modified (methylated, acetlyated and<br>others) to regulate gene transcription. <a>PMID:16209651 PMID:30212449</a><br><a>PMID:9305837</a></p>
        <span class="pill">303,574 annotations</span>
        <h3 class="sec">Synonyms</h3>
        <p>Synonyms are alternative words or phrases closely related in meaning to the</p>
      </div>
    </div>
  </div></div>
</div>

</div>
</body>
</html>
```
FILE: styles.css
```css
* { box-sizing: border-box; }
html, body { margin: 0; padding: 0; }
body { width: 2557px; height: 1542px; overflow: hidden; background: #fff; color: #000; font-family: "Liberation Sans", "Noto Sans CJK SC", sans-serif; }
h1, h2, h3, h4, p, ul { margin: 0; padding: 0; font-weight: normal; }
i { font-style: normal; }
svg { display: block; flex: none; }
.defs { position: absolute; width: 0; height: 0; }
.s16 { width: 16px; height: 16px; }
.s18 { width: 18px; height: 18px; }
.s20 { width: 20px; height: 20px; }
.desk { position: relative; width: 2557px; height: 1542px; overflow: hidden; }

/* results page behind everything */
.back { height: 1542px; display: flex; flex-direction: column; }
.back-tabs { height: 30px; background: #dde1e8; display: flex; align-items: flex-start; padding: 0 0 0 6px; font: 12.5px/22px "Open Sans", sans-serif; color: #33363b; flex: none; }
.back-chev { width: 28px; height: 20px; background: #fff; border-radius: 0 0 8px 8px; display: flex; align-items: center; justify-content: center; margin-right: 5px; padding-top: 2px; }
.btab { width: 238px; height: 20px; display: flex; align-items: center; padding: 0 11px 0 8px; border-right: 1px solid #a9b0ba; }
.btab .s18, .canvas-ico { margin-right: 7px; }
.btab b { flex: 1; font-weight: normal; white-space: nowrap; overflow: hidden; }
.canvas-ico { width: 17px; height: 17px; border-radius: 50%; border: 3px dashed #e23b2e; }
.ctl { margin-left: auto; display: flex; color: #85888d; }
.ctl svg { margin: 0 15px; }
.back-ctl svg { margin: 0 13px; }
.back-bar { height: 81px; background: #fff; border-bottom: 1px solid #d5d5d5; padding-top: 6px; flex: none; }
.back-omni { height: 34px; background: #e9eef8; margin-left: 120px; }
.res { flex: 1; display: flex; flex-direction: column; align-items: flex-start; }
.box { background: #f1f1f1; margin-left: 37px; width: 1463px; flex: none; }
.box-a { height: 362px; padding: 150px 0 0 910px; }
.frag p { font-size: 11.7px; line-height: 15px; white-space: nowrap; }
.frag .f1 { padding-left: 3px; margin-bottom: 16px; }
.res a { color: #00e; text-decoration: underline; }
.res a.v { color: #551a8b; }
.box-b { margin-top: 61px; height: 404px; display: flex; }
.viewer { width: 910px; padding-left: 21px; }
.jmol { width: 360px; height: 364px; background: #000; padding-top: 268px; }
.spin { display: flex; align-items: center; padding: 18px 0 0 62px; font: 14.5px/18px "Liberation Serif", serif; }
.btn { width: 147px; height: 17px; border: 1px solid #6b6b6b; border-radius: 2px; background: #efefef; font: 12px/15px "Liberation Sans", sans-serif; text-align: center; white-space: nowrap; }
.chk { width: 11px; height: 11px; border: 1px solid #767676; border-radius: 2px; background: #fff; margin: 0 3px 0 4px; }
.frag-b { padding-top: 5px; }
.frag .cell { width: 8px; height: 28px; line-height: 28px; font-weight: bold; background: #ddd; }
.frag .c2 { height: 16px; margin-top: 18px; }
.frag .c3 { height: 17px; margin-top: 18px; }
.frag .f3 { margin-top: 53px; }
.frag .f4 { margin-top: 60px; }
.banner { margin: 22px 0 0 37px; width: 252px; height: 23px; background: #f90; color: #fff; font-size: 16px; line-height: 19px; padding: 2px 0 0 2px; white-space: nowrap; }
.banner mark { display: inline-block; background: #c59e60; color: #3c3c3c; padding-left: 9px; height: 19px; }
.go { display: flex; align-items: flex-start; margin: 14px 0 0 37px; }
.go h2 { font-size: 14.3px; font-weight: bold; line-height: 16px; }
.go-l { width: 1080px; height: 315px; background: #f1f1f1; padding: 4px 15px 0 4px; font-size: 11.7px; line-height: 13px; }
.go-l h2 { padding-left: 1px; }
.t { display: grid; grid-template-columns: 29px 54px 41px 40px 33px 23px 35px 778px; column-gap: 4px; margin-top: 4px; }
.t > * { display: flex; align-items: center; justify-content: center; white-space: nowrap; }
.t > .l { justify-content: flex-start; }
.t .p { justify-content: flex-start; font-family: "Liberation Serif", serif; font-size: 12px; }
.t .g { display: block; white-space: normal; }
.t sup { font-size: 10.500px; font-weight: normal; line-height: 0; position: relative; top: -4px; vertical-align: baseline; }
.hd { height: 26px; text-align: center; }
.hd .l { text-align: left; }
.hd > *, .t.dk > * { background: #ddd; }
.go-r { width: 1440px; height: 280px; background: #f1f1f1; padding: 21px 0 0 5px; font-size: 11.7px; line-height: 17px; white-space: nowrap; }
.go-r h2 { margin-bottom: 5px; }
.c { display: flex; gap: 2px; margin: 0 0 1.500px 1px; height: 17px; }
.c b { width: 115px; padding-left: 2px; }
.c a, .c i { width: 70.700px; text-align: center; }
.c.dk > * { background: #ddd; }
.notes { font: 10.800px/14px "Liberation Serif", serif; padding-top: 7px; }
.notes p { display: flex; height: 15px; white-space: pre; }
.notes span { width: 16px; font-family: "Liberation Sans", sans-serif; font-size: 10.500px; }
.notes sup { font: 10.500px/1 "Liberation Sans", sans-serif; margin-top: -3px; }
.notes .n1 { height: 19px; padding-top: 4px; }
.notes .n1 span { margin-top: -3px; }
.notes .wide { word-spacing: 1.050px; height: 17px; }
.notes .n3 { height: 12px; line-height: 12px; }
.dl { font: bold 16.820px/20px "Liberation Serif", serif; margin: 26px 0 0 876px; white-space: nowrap; }
.hr { height: 2px; width: 2540px; margin: 17px 0 0 10px; border-top: 1px solid #8a8a8a; border-bottom: 1px solid #e5e5e5; }
.cite { font: 14.430px/17px "Liberation Serif", serif; margin: 24px 0 0 14px; white-space: nowrap; }
.refs { font: 14.410px/16.600px "Liberation Serif", serif; margin: 16px 0 0 50px; white-space: nowrap; }
.hscroll { height: 17px; background: #f1f1f1; display: flex; align-items: center; flex: none; }
.hthumb { height: 13px; background: #c1c1c1; }
.al, .ar, .au, .ad { width: 0; height: 0; border: 4px solid transparent; flex: none; }
.al { border-right: 5px solid #a3a3a3; border-left: 0; margin: 0 6px; }
.ar { border-left: 5px solid #505050; border-right: 0; }
.au { border-bottom: 5px solid #a3a3a3; border-top: 0; }
.ad { border-top: 5px solid #505050; border-bottom: 0; }
.back-scroll { width: 2557px; margin-top: auto; }
.back-scroll .hthumb { width: 2300px; }

/* floating browser windows */
.win { position: absolute; display: flex; flex-direction: column; background: #fff; border-radius: 9px; overflow: hidden; box-shadow: 0 0 0 1px rgba(90, 90, 90, .45), 0 22px 40px rgba(0, 0, 0, .24), 0 0 16px rgba(0, 0, 0, .14); --strip: #dde1e9; --chev: #fff; }
.win.active { --strip: #d3e3fd; --chev: #ebf2fe; box-shadow: 0 0 0 1px rgba(90, 90, 90, .55), 0 30px 50px rgba(0, 0, 0, .36), 0 0 22px rgba(0, 0, 0, .2); }
.w1 { left: 4px; top: 16px; width: 944px; height: 789px; --gap: 34px; --last: 26px; --bpad: 37px; --logo: 201px; --shift: -45px; --inp: 517px; --side: 189.500px; }
.w2 { left: 971px; top: -9px; width: 857px; height: 650px; --gap: 11.500px; --last: 15px; --bpad: 17px; --inp: 464px; --logo: 180px; --shift: -38px; --side: 168px; }
.w3 { left: 974px; top: 368px; width: 808px; height: 655px; padding-top: 262px; --side: 156.500px; }
.w4 { left: 1860px; top: 14px; width: 835px; height: 800px; --gap: 11.500px; --last: 15px; --bpad: 17px; --inp: 450px; --logo: 175px; --shift: -37px; --side: 162.500px; }
.w5 { left: 1797px; top: 775px; width: 839px; height: 800px; --gap: 11.500px; --last: 15px; --bpad: 17px; --inp: 452px; --logo: 176px; --shift: -37px; --side: 163.500px; }
.w4 .view, .w5 .view { padding-right: 17px; }
.tabs { height: 39px; flex: none; background: var(--strip); display: flex; align-items: center; padding: 5px 0 0 6px; }
.chev { width: 28px; height: 28px; border-radius: 9px; background: var(--chev); display: flex; align-items: center; justify-content: center; margin: -6px 6px 0 0; }
.tab { position: relative; width: 232px; height: 34px; background: #fff; border-radius: 9px 9px 0 0; display: flex; align-items: center; padding: 0 8px 6px 7px; }
.tab::before, .tab::after { content: ""; position: absolute; bottom: 0; width: 9px; height: 9px; }
.tab::before { left: -9px; background: radial-gradient(circle at 0 0, transparent 9px, #fff 9.500px); }
.tab::after { right: -9px; background: radial-gradient(circle at 100% 0, transparent 9px, #fff 9.500px); }
.ttl { flex: 1; font: 12.500px/18px "Open Sans", sans-serif; letter-spacing: -.15px; color: #1f1f1f; padding-left: 9px; white-space: nowrap; }
.plus { margin: -6px 0 0 12px; }
.tabs .ctl { margin-top: -6px; }
.active .ctl { color: #111; }
.bar { height: 46px; flex: none; display: flex; align-items: center; padding: 0 14px 0 13px; }
.bar > .s18 { margin-right: 18px; }
.bar > .s18:last-child { margin: 0 0 0 16px; }
.bar > .sep { margin: 0 16px 0 -1px; }
.sep { width: 2px; height: 16px; background: #c9dcf9; flex: none; }
.omni { flex: 1; height: 34px; border-radius: 17px; background: #ecf1fa; margin: 0 18px 0 -1px; display: flex; align-items: center; padding: 0 14px 0 3px; gap: 14px; }
.w4 .omni { flex: none; width: 576px; margin: 0 0 0 -1px; }
.tune { width: 28px; height: 28px; border-radius: 50%; background: #fff; display: flex; align-items: center; justify-content: center; flex: none; margin-right: -8px; }
.url { flex: 1; font: 14.450px/20px "Open Sans", sans-serif; color: #474a4f; white-space: nowrap; }
.url b { font-weight: normal; color: #1b1c1f; }
.marks { height: 35px; flex: none; display: flex; align-items: center; padding: 0 14px 6px 18px; border-bottom: 1px solid #d9d9d9; font: 11.900px/18px "Open Sans", "Noto Sans CJK SC", sans-serif; color: #3c3f44; white-space: nowrap; }
.marks > .sep { margin: 0 14px; }
.m { display: flex; gap: 6px; align-items: center; flex: none; }
.m1 { width: 72px; } .m2 { width: 87px; } .m3 { width: 62px; } .m4 { width: 154px; }
.els { width: 16px; font: 21px/18px "Liberation Serif", serif; color: #f37021; text-align: center; }
.allm { margin-left: auto; display: flex; align-items: center; }
.allm .s18 { margin: 0 6px 0 15px; }
.more { width: 12px; height: 12px; margin-right: 17px; }
.allt { width: 50px; }
.view { flex: 1; min-height: 0; display: flex; }
.page { flex: 1; min-width: 0; overflow: hidden; }
.vscroll { width: 17px; background: #f1f1f1; flex: none; display: flex; flex-direction: column; align-items: center; padding: 7px 0 6px; }
.vscroll .ad { margin-top: auto; }
.vthumb { width: 13px; height: 47px; background: #c1c1c1; margin-top: 5px; }
.w2 .vthumb { height: 82px; }
.w1 .hthumb { width: 629px; }
.w1 .ar { margin: 0 22px 0 auto; }
.ebi { height: 40px; background: #222; color: #fff; font-size: 15.840px; display: flex; align-items: center; justify-content: flex-end; gap: var(--gap); white-space: nowrap; }
.ebi span { display: flex; align-items: center; gap: 6px; padding-bottom: 3px; }
.ebi span .s18 { width: 17px; height: 17px; }
.ebi .brand { height: 38px; margin-left: calc(var(--last) - var(--gap)); padding: 0 8px 1px var(--bpad); border-left: 1px solid #888; gap: 5px; color: #ddd; }
.w4 .brand { width: 136px; }
.hex { width: 32px; height: 35px; }
.hero { position: relative; height: 103px; display: flex; background: #2fb0e0; }
.net { position: absolute; inset: 0; width: 100%; height: 100%; }
.logo { position: relative; width: var(--logo); height: 103px; margin-left: 36px; flex: none; color: #fff; font-family: Lato, sans-serif; font-weight: 900; line-height: 1; }
.q { position: absolute; left: -6px; top: 8px; width: 52px; height: 79px; }
.l1 { position: absolute; left: 39px; top: 10px; font-size: 42px; letter-spacing: -.5px; }
.l2 { position: absolute; left: 41px; top: 42px; font-size: 43px; letter-spacing: -1px; }
.hmain { position: relative; padding-top: 3px; color: #fff; }
.srch { display: flex; }
.inp { width: var(--inp); height: 44px; background: #fff; border: 1px solid #bbb; border-radius: 3px 0 0 3px; }
.go-btn { width: 84px; height: 42px; background: #3298e1; border-bottom: 1px solid #1f7fc4; border-radius: 0 4px 4px 0; font: bold 15.800px/39px "Liberation Sans", sans-serif; text-align: center; }
.nav { display: flex; margin: 11px 0 0 var(--shift); font-size: 17.600px; line-height: 40px; }
.nav span { height: 42px; padding: 0 17px; border-left: 1px solid #fff; display: flex; }
.nav span:first-child { border: 0; padding: 0 18px 0 0; }
.nav .tall { height: 45px; padding-top: 3px; }
.talk { width: 20px; height: 16px; margin: 12px 4px 0 0; }
.cols { display: flex; margin-top: -.4px; font-size: 17.600px; line-height: 26.400px; color: #222; white-space: nowrap; }
.side { width: var(--side); margin-left: 58.300px; flex: none; display: flex; flex-direction: column; }
.cols a { color: #2c7ab8; }
.side i { color: #cad6d6; }
.main { flex: 1; min-width: 0; padding-right: 16px; }
.h1 { height: 50px; display: flex; align-items: center; margin-bottom: 8.500px; }
h1 { font-size: 35.200px; line-height: 50px; color: #2c3e50; }
.asp { width: 30px; height: 30px; margin: 12px 9px 0 10px; border: 1px solid #f7aaaa; color: #f59e9e; border-radius: 50%; font-size: 20px; line-height: 28px; text-align: center; }
.asp.fn { border-color: #5cb874; color: #5cb874; }
.bsk { --disc: #2980b9; width: 30px; height: 30px; margin: 10px 16px 0 0; border-radius: 50%; background: var(--disc); }
.bsk.off { --disc: #cacaca; }
.bsk svg { width: 30px; height: 30px; }
.json { width: 80px; height: 22px; margin-top: 14px; border-radius: 11px; background: #3298e1; color: #fff; font-weight: bold; font-size: 14px; line-height: 22px; display: flex; align-items: center; justify-content: center; gap: 4px; }
h3 { font-size: 26.400px; line-height: 37px; color: #2c3e50; margin-bottom: 8.300px; }
h4 { font-size: 22px; line-height: 31px; color: #2c3e50; margin-bottom: 9.300px; }
.main p { margin-bottom: 17.600px; }
.main .aspect { font-weight: bold; margin-bottom: 16.300px; }
.pill { display: block; width: max-content; height: 27px; line-height: 27px; padding: 0 14px; border-radius: 12px; background: #3298e1; color: #fff; }
h3.sec { margin: 17.500px 0 9.300px; }
.chart { display: flex; align-items: center; gap: 7px; }
.exp { width: 38px; height: 38px; }
.alert { height: 169px; margin-bottom: 17.600px; background: #fbe4df; padding: 19px 17px 0; }
.warn { display: inline-block; width: 19px; height: 17px; margin: 0 6px 0 0; vertical-align: -2px; }
.tbl { border: 1px solid #f0f0f0; border-bottom: 0; }
.tr { display: grid; grid-template-columns: 485px 1fr; }
.tr > * { padding: 9px 11px; height: 46px; }
.tr > * + * { padding-left: 11px; border-left: 1px solid #f0f0f0; }
.th { background: #ecf0f1; border-bottom: 3px solid #f6f7f7; }
.th > * + * { border: 0; }
```
